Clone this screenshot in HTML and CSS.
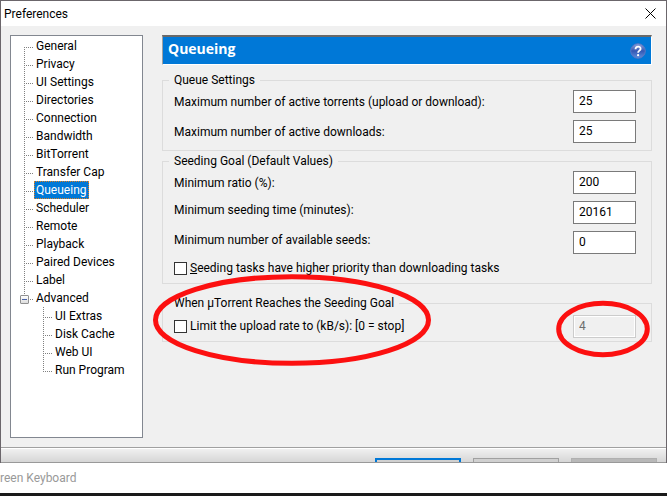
FILE: index.html
```
<!DOCTYPE html>
<html lang="en">
<head>
    <meta charset="UTF-8">
    <meta name="viewport" content="width=device-width, initial-scale=1.0">
    <title>Preferences</title>
    <link rel="stylesheet" href="styles.css">
</head>
<body>

    <main class="dialog">
        <header class="titlebar">
            <h1>Preferences</h1>
            <button type="button" class="close" aria-label="Close">
                <svg width="11" height="11" viewBox="0 0 11 11"><path d="M.5 .5l10 10M10.500 .5l-10 10" stroke="#000" fill="none"/></svg>
            </button>
        </header>

        <div class="content">
            <!-- Category tree -->
            <nav class="tree">
                <ul>
                    <li><a href="#general">General</a></li>
                    <li><a href="#privacy">Privacy</a></li>
                    <li><a href="#ui">UI Settings</a></li>
                    <li><a href="#directories">Directories</a></li>
                    <li><a href="#connection">Connection</a></li>
                    <li><a href="#bandwidth">Bandwidth</a></li>
                    <li><a href="#bittorrent">BitTorrent</a></li>
                    <li><a href="#transfer">Transfer Cap</a></li>
                    <li><a href="#queueing" class="selected">Queueing</a></li>
                    <li><a href="#scheduler">Scheduler</a></li>
                    <li><a href="#remote">Remote</a></li>
                    <li><a href="#playback">Playback</a></li>
                    <li><a href="#devices">Paired Devices</a></li>
                    <li><a href="#label">Label</a></li>
                    <li class="parent">
                        <button type="button" class="toggle" aria-label="Collapse Advanced"></button>
                        <a href="#advanced">Advanced</a>
                        <ul>
                            <li><a href="#extras">UI Extras</a></li>
                            <li><a href="#cache">Disk Cache</a></li>
                            <li><a href="#webui">Web UI</a></li>
                            <li><a href="#run">Run Program</a></li>
                        </ul>
                    </li>
                </ul>
            </nav>

            <!-- Queueing page -->
            <form class="page">
                <div class="page-title">
                    <h2>Queueing</h2>
                    <button type="button" class="help" aria-label="Help">
                        <svg width="16" height="16" viewBox="0 0 16 16">
                            <defs>
                                <linearGradient id="ball" x1="0" y1="0" x2="0" y2="1">
                                    <stop offset="0" stop-color="#8fa3dc"/>
                                    <stop offset=".5" stop-color="#3558b4"/>
                                    <stop offset="1" stop-color="#5f8fdc"/>
                                </linearGradient>
                            </defs>
                            <circle cx="8" cy="8" r="7.300" fill="url(#ball)" stroke="#5877c4"/>
                            <path d="M5.500 6.200C5.500 2.600 10.800 2.900 10.600 5.900C10.500 7.700 8.100 7.600 8.100 9.800" fill="none" stroke="#fff" stroke-width="1.800"/>
                            <circle cx="8.100" cy="12.200" r="1.100" fill="#fff"/>
                        </svg>
                    </button>
                </div>

                <fieldset>
                    <legend>Queue Settings</legend>
                    <div class="row">
                        <label for="maxTorrents">Maximum number of active torrents (upload or download):</label>
                        <input type="text" id="maxTorrents" value="25">
                    </div>
                    <div class="row">
                        <label for="maxDownloads">Maximum number of active downloads:</label>
                        <input type="text" id="maxDownloads" value="25">
                    </div>
                </fieldset>

                <fieldset>
                    <legend>Seeding Goal (Default Values)</legend>
                    <div class="row">
                        <label for="minRatio">Minimum ratio (%):</label>
                        <input type="text" id="minRatio" value="200">
                    </div>
                    <div class="row top">
                        <label for="minTime">Minimum seeding time (minutes):</label>
                        <input type="text" id="minTime" value="20161">
                    </div>
                    <div class="row top">
                        <label for="minSeeds">Minimum number of available seeds:</label>
                        <input type="text" id="minSeeds" value="0">
                    </div>
                    <div class="check">
                        <input type="checkbox" id="priority">
                        <label for="priority"><u>S</u>eeding tasks have higher priority than downloading tasks</label>
                    </div>
                </fieldset>

                <div class="goal">
                    <fieldset>
                        <legend>When µTorrent Reaches the Seeding Goal</legend>
                        <div class="row">
                            <div class="check">
                                <input type="checkbox" id="limit">
                                <label for="limit">Limit the upload rate to (kB/s): [0 = stop]</label>
                            </div>
                            <input type="text" id="limitRate" aria-label="Upload rate" value="4" disabled>
                        </div>
                    </fieldset>
                    <!-- Red marker rings -->
                    <svg class="ring ring-left" width="280" height="94" viewBox="0 0 280 94"><ellipse cx="140" cy="47" rx="136.500" ry="43.300"/></svg>
                    <svg class="ring ring-right" width="96" height="60" viewBox="0 0 96 60"><ellipse cx="48" cy="30" rx="44.300" ry="25.700"/></svg>
                </div>
            </form>
        </div>

        <footer class="buttons">
            <button type="button" class="default" aria-label="OK"></button>
            <button type="button" aria-label="Cancel"></button>
            <button type="button" aria-label="Apply" disabled></button>
        </footer>
    </main>

    <div class="keyboard">reen Keyboard</div>

</body>
</html>
```
FILE: styles.css
```
* {
    box-sizing: border-box;
}
body {
    display: flex;
    flex-direction: column;
    min-height: 100vh;
    margin: 0;
    background-color: #6b666b;
    font-family: Roboto, "Segoe UI", sans-serif;
    font-size: 12px;
    line-height: 18px;
    color: #000;
}
button {
    padding: 0;
    border: none;
    background: none;
}
h1, h2, ul, form {
    margin: 0;
    padding: 0;
}
.dialog {
    flex: 1;
    display: flex;
    flex-direction: column;
    margin: 1px 1px 0;
    background-color: #f0f0f0;
}
.titlebar {
    display: flex;
    align-items: center;
    justify-content: space-between;
    height: 25px;
    padding: 0 10px 0 3px;
    background-color: #fff;
}
.titlebar h1 {
    font-size: 12px;
    font-weight: normal;
}
.close svg, .help svg {
    display: block;
}
.content {
    flex: 1;
    display: flex;
    gap: 19px;
    padding: 9px 14px 9px 9px;
}

/* Tree */
.tree {
    flex: 0 0 133px;
    padding: 1px 0 0 13px;
    border: 1px solid #828790;
    background-color: #fff;
}
.tree ul {
    list-style: none;
}
.tree li {
    padding-left: 10px;
    background-image:
        repeating-linear-gradient(to bottom, #808080 0 1px, transparent 1px 2px),
        repeating-linear-gradient(to right, #808080 0 1px, transparent 1px 2px);
    background-repeat: no-repeat;
    background-size: 1px 100%, 10px 1px;
    background-position: 0 0, 0 10px;
}
.tree > ul > li:first-child {
    background-position: 0 10px, 0 10px;
}
.tree li:last-child {
    background-size: 1px 10px, 10px 1px;
}
.tree li ul {
    margin-left: 9px;
}
.tree a {
    display: block;
    width: max-content;
    height: 18px;
    padding: 0 2px;
    color: #000;
    text-decoration: none;
}
.tree a.selected {
    background-color: #0078d7;
    color: #fff;
    outline: 1px dotted #e08020;
    outline-offset: -1px;
}
.parent {
    position: relative;
}
.toggle {
    position: absolute;
    left: -4px;
    top: 6px;
    width: 9px;
    height: 9px;
    border: 1px solid #919191;
    border-radius: 1px;
    background: linear-gradient(#4b63a7, #4b63a7) center / 5px 1px no-repeat, linear-gradient(#fff, #ddd);
}

/* Page */
.page {
    flex: 1;
}
.page-title {
    display: flex;
    align-items: center;
    justify-content: space-between;
    height: 30px;
    margin-bottom: 6px;
    padding: 0 5px;
    border: 1px solid #fff;
    border-top: 2px solid #696969;
    border-left-color: #a0a0a0;
    background-color: #0078d7;
}
.page-title h2 {
    padding-bottom: 3px;
    font-family: "Open Sans", sans-serif;
    font-size: 14px;
    color: #fff;
}
fieldset {
    display: flex;
    flex-direction: column;
    gap: 7px;
    margin: 0 0 1px;
    padding: 1px 15px 7px 11px;
    border: 1px solid #dcdcdc;
}
legend {
    margin-left: -5px;
    padding: 0 5px;
}
.row {
    display: flex;
    align-items: center;
    justify-content: space-between;
}
.row.top {
    align-items: flex-start;
}
input[type="text"] {
    width: 63px;
    height: 23px;
    padding: 0 5px 2px;
    border: 1px solid #7a7a7a;
    background-color: #fff;
    font: inherit;
    color: #000;
}
input[type="text"]:disabled {
    border-color: #ccc;
    background-color: #f0f0f0;
    box-shadow: inset 0 0 0 1px #fff;
    color: #6d6d6d;
}
.check {
    display: flex;
    align-items: center;
    gap: 3px;
    line-height: 15px;
}
.check input {
    appearance: none;
    width: 13px;
    height: 13px;
    margin: 0;
    border: 1px solid #333;
    background-color: #fff;
}
.goal {
    position: relative;
    margin-top: 10px;
}
.goal fieldset {
    padding: 3px 15px 3px 11px;
}
.ring {
    position: absolute;
    fill: none;
    stroke: #fc1010;
    stroke-width: 5px;
    pointer-events: none;
}
.ring-left {
    left: -10px;
    top: -21px;
}
.ring-right {
    right: 1px;
    top: 5px;
}

/* Bottom strip, cut off by the keyboard window */
.buttons {
    display: flex;
    justify-content: flex-end;
    gap: 12px;
    height: 16px;
    padding: 10px 9px 0;
    overflow: hidden;
    border-top: 1px solid #a0a0a0;
    border-bottom: 1px solid #999;
    background: linear-gradient(#fff 0 1px, #f0f0f0 1px, #d6d6d6);
}
.buttons button {
    flex: 0 0 86px;
    height: 23px;
    border: 1px solid #a0a0a0;
    background-color: #d0d0d0;
}
.buttons .default {
    border: 2px solid #0078d7;
}
.buttons button:disabled {
    border-color: #b0b0b0;
    background-color: #b8b8b8;
}
.keyboard {
    height: 33px;
    padding-top: 6px;
    border-bottom: 3px solid #1a1a1a;
    background-color: #fff;
    color: #999;
}
```
